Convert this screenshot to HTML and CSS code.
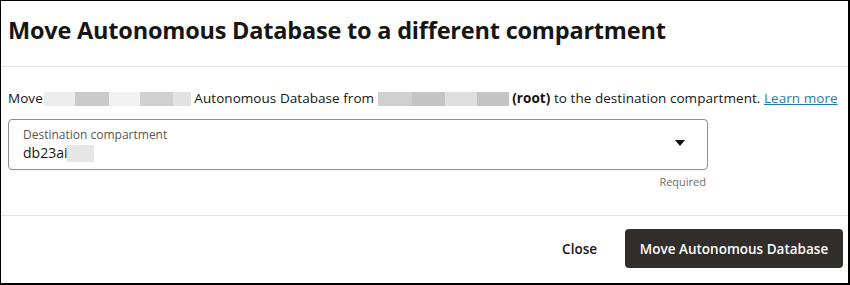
FILE: index.html
```html
<!DOCTYPE html>
<html lang="en">
<head>
<meta charset="utf-8">
<title>Move Autonomous Database</title>
<link rel="stylesheet" href="styles.css">
</head>
<body>
<div class="dialog">
  <header class="dialog-header">
    <h1 class="dialog-title">Move Autonomous Database to a different compartment</h1>
  </header>
  <section class="dialog-body">
    <p class="intro">Move<span class="redact r1"></span><span class="redact r2"></span><span class="redact r3"></span><span class="redact r4"></span><span class="redact r5"></span> Autonomous Database from <span class="redact r6"></span><span class="redact r7"></span><span class="redact r8"></span><span class="redact r9"></span> <b>(root)</b> to the destination compartment. <a class="link" href="#">Learn more</a></p>
    <div class="field">
      <div class="field-box">
        <div class="field-text">
          <span class="field-label">Destination compartment</span>
          <span class="field-value">db23ai<span class="redact r10"></span></span>
        </div>
        <svg class="caret" width="10" height="6" viewBox="0 0 10 6"><path d="M0 0h10L5 6z" fill="#161513"/></svg>
      </div>
      <div class="field-help">Required</div>
    </div>
  </section>
  <footer class="dialog-footer">
    <button class="btn btn-ghost">Close</button>
    <button class="btn btn-primary">Move Autonomous Database</button>
  </footer>
</div>
</body>
</html>
```

FILE: styles.css
```css
* { box-sizing: border-box; }
html, body { margin: 0; padding: 0; background: #fff; }
body {
  font-family: "Open Sans", "Noto Sans", Arial, sans-serif;
  color: #161513;
}
.dialog {
  width: 850px;
  height: 285px;
  border: 1px solid #000;
  border-right-width: 2px;
  border-bottom-width: 2px;
  display: flex;
  flex-direction: column;
  background: #fff;
}
.dialog-header {
  height: 66px;
  border-bottom: 1px solid #e4e4e4;
  padding: 13px 7px 0;
}
.dialog-title {
  margin: 0;
  font-size: 23.5px;
  font-weight: 700;
  line-height: 32px;
  letter-spacing: -0.2px;
}
.dialog-body {
  height: 149px;
  border-bottom: 1px solid #e4e4e4;
  padding: 21px 7px 0;
}
.intro {
  margin: 0;
  font-size: 13.5px;
  line-height: 20px;
  white-space: nowrap;
  letter-spacing: 0.05px;
}
.intro b { font-weight: 700; }
.redact {
  display: inline-block;
  height: 14px;
  vertical-align: -3px;
}
.r1 { width: 31px; background: #ededed; margin-left: 1px; }
.r2 { width: 34px; background: #cacaca; }
.r3 { width: 31px; background: #f1f1f1; }
.r4 { width: 33px; background: #d0d0d0; }
.r5 { width: 18px; background: #e2e2e2; }
.r6 { width: 34px; background: #d0d0d0; }
.r7 { width: 33px; background: #c4c4c4; }
.r8 { width: 32px; background: #dedede; }
.r9 { width: 32px; background: #c4c4c4; }
.r10 { width: 27px; height: 17px; background: #e6e6e6; vertical-align: -4px; }
.link {
  color: #1f7ea9;
  text-decoration: underline;
}
.field {
  width: 700px;
  margin-top: 11px;
}
.field-box {
  height: 51px;
  border: 1px solid #8f8c8a;
  border-radius: 4px;
  display: flex;
  align-items: center;
  padding: 0 22px 0 14px;
}
.field-text {
  flex: 1;
  display: flex;
  flex-direction: column;
}
.field-label {
  font-size: 12px;
  line-height: 16px;
  color: #5a5654;
}
.field-value {
  font-size: 14px;
  line-height: 20px;
}
.caret { display: block; margin-top: -4px; }
.field-help {
  text-align: right;
  font-size: 11px;
  line-height: 20px;
  color: #6f6c6a;
  padding-right: 2px;
  margin-top: 2px;
}
.dialog-footer {
  flex: 1;
  display: flex;
  justify-content: flex-end;
  align-items: center;
  gap: 8px;
  padding: 0 5px 2px 0;
}
.btn {
  font-family: inherit;
  font-size: 13.5px;
  font-weight: 600;
  border: none;
  border-radius: 4px;
  height: 39px;
  cursor: pointer;
}
.btn-ghost {
  background: transparent;
  color: #161513;
  padding: 0 20px;
}
.btn-primary {
  background: #312d2a;
  color: #fff;
  width: 218px;
}
```
